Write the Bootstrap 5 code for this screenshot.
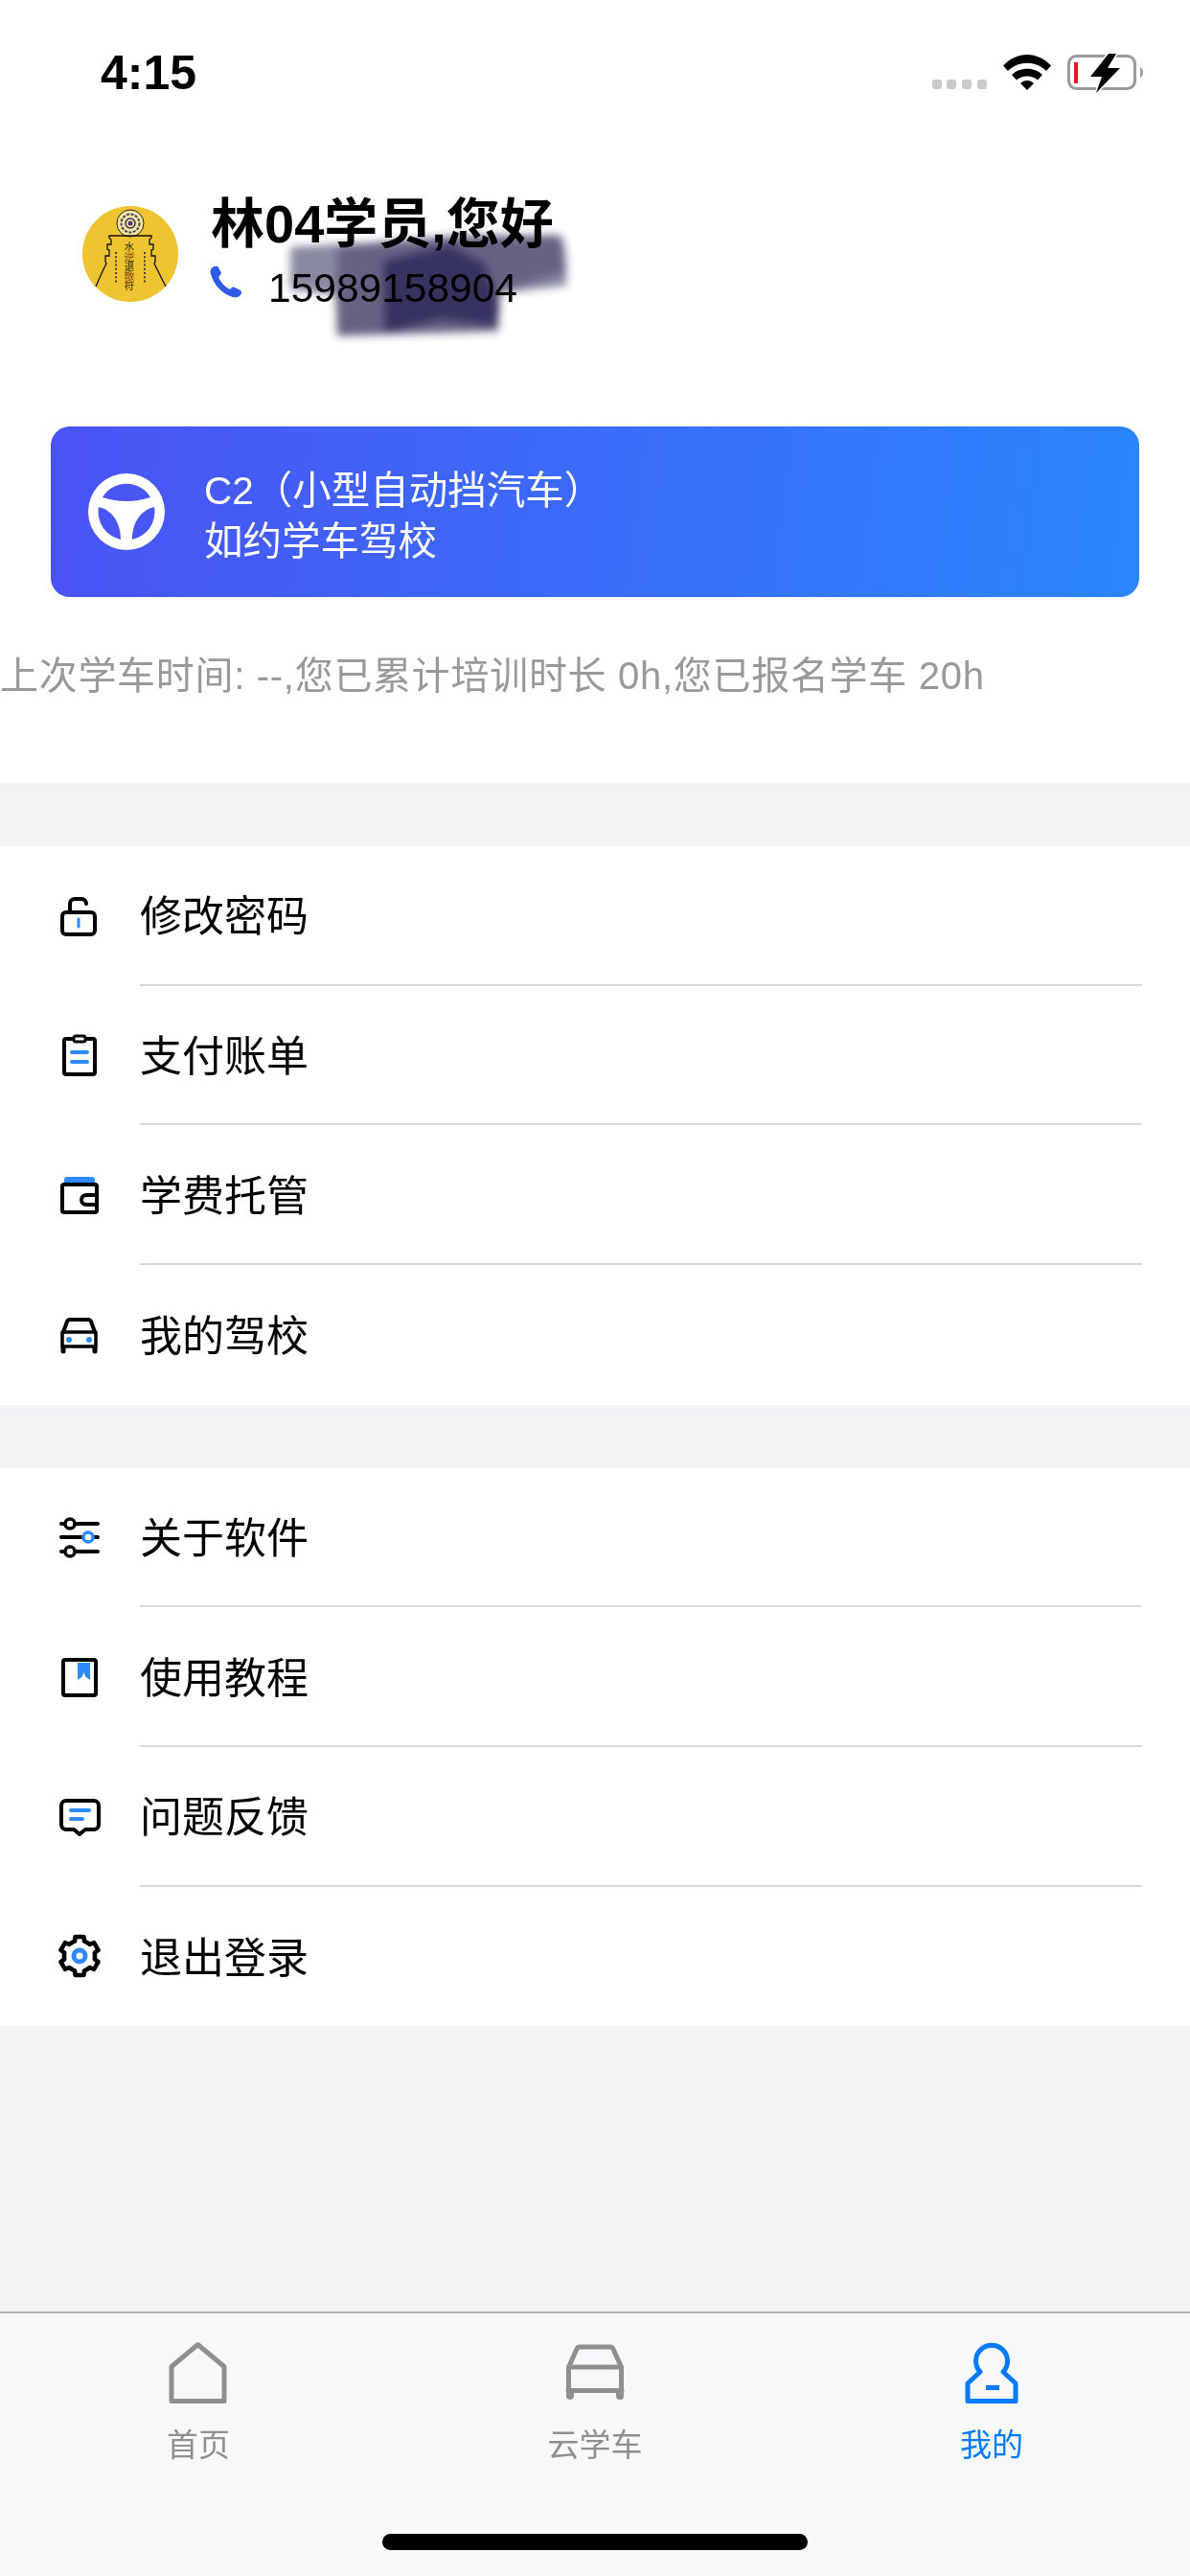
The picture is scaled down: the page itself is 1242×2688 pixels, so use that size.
<!DOCTYPE html>
<html lang="zh">
<head>
<meta charset="utf-8">
<title>我的</title>
<link href="https://cdn.jsdelivr.net/npm/bootstrap@5.3.0/dist/css/bootstrap.min.css" rel="stylesheet">
<style>
html,body{margin:0;height:2688px;width:1242px;overflow:hidden}
body{font-family:"Liberation Sans","Noto Sans CJK SC",sans-serif;background:#f2f3f5;color:#000}
.screen-wrap{height:2688px;width:1242px}
.top-area{background:#fff;height:817px}
.status-row{height:132px;padding:0 47px 0 105px}
.clock{font-size:50px;font-weight:700;line-height:1;margin-top:20px}
.status-icons{width:224px;height:60px;margin-top:22px}
.profile-box{padding-left:86px;margin-top:83px;height:100px;gap:34px}
.avatar-pic{width:100px;height:100px}
.hello{font-size:56px;font-weight:700;line-height:64px;margin-top:-13px;white-space:nowrap}
.phone-line{font-size:42.5px;line-height:48px;margin-top:11px;white-space:nowrap}
.phone-ico{width:34px;height:34px;margin:-14px 27px 0 -1px}
.smudge{left:285px;top:230px;width:330px;height:130px;pointer-events:none;mix-blend-mode:multiply}
.licence-card{margin:130px 53px 0;height:178px;border-radius:20px;background:linear-gradient(97deg,#4a52f3 0%,#2a86fe 100%);color:#fff;padding-left:39px;gap:41px}
.wheel-ico{width:80px;height:80px}
.licence-text{font-size:40.5px;line-height:53px;padding-top:10px}
.note-line{font-size:40px;line-height:56px;color:#999;padding-left:0;margin-top:54px;white-space:nowrap;letter-spacing:.7px}
.menu-group{margin-top:66px;background:#fff}
.menu-row{height:145.67px;border:0;padding:0;background:#fff;color:#000}
.menu-ico{width:60px;height:60px;margin:0 33px 0 53px;flex:none}
.menu-label{font-size:44px;height:100%;margin-right:50px;padding-top:5px;border-bottom:2px solid #d9d9d9;flex:1}
.menu-row:last-child .menu-label{border-bottom:0}
.tabbar{background:#f7f8fa;border-top:2px solid #b3b3b5;height:276px}
.tab-cell{padding-top:27px;width:414px}
.tab-ico{width:70px;height:70px;display:block}
.tab-name{font-size:33px;line-height:40px;color:#8f8f8f;margin-top:21px}
.tab-on{color:#007aff}
.home-bar{width:444px;height:17px;border-radius:9px;background:#000;margin:72px auto 0}
</style>
</head>
<body>
<div class="screen-wrap d-flex flex-column position-relative">
  <div class="top-area position-relative">
    <div class="status-row d-flex justify-content-between align-items-center">
      <div class="clock">4:15</div>
      <svg class="status-icons" viewBox="971 47 224 60">
        <g fill="#c9c9cc"><rect x="973" y="83" width="10" height="10" rx="3"/><rect x="988" y="83" width="10" height="10" rx="3"/><rect x="1004" y="83" width="10" height="10" rx="3"/><rect x="1020" y="83" width="10" height="10" rx="3"/></g>
        <g fill="#000"><path d="M1047 68.500 C1061 53 1083 53 1097 68.500 L1092 74 C1081 63 1063 63 1052 74Z"/><path d="M1056 78 C1064 69.500 1080 69.500 1088 78 L1083 83.500 C1077 78 1067 78 1061 83.500Z"/><path d="M1065 87 C1069 83 1075 83 1079 87 L1072 94Z"/></g>
        <rect x="1115.500" y="58.500" width="69" height="34" rx="8" fill="none" stroke="#9a9a9a" stroke-width="3"/>
        <path d="M1190 70 C1194 72 1194 79 1190 81Z" fill="#9a9a9a"/>
        <rect x="1121" y="65" width="4" height="22" fill="#f0141e"/>
        <path d="M1157 56 L1138 80 H1150 L1144 97 L1169 71 H1156 L1165 56Z" fill="#000" stroke="#fff" stroke-width="3" paint-order="stroke"/>
      </svg>
    </div>
    <div class="profile-box d-flex align-items-start">
      <svg class="avatar-pic flex-none" viewBox="0 0 100 100">
        <circle cx="50" cy="50" r="50" fill="#eec430"/>
        <circle cx="50" cy="18" r="14" fill="#f3e3a4" stroke="#222" stroke-width="1"/>
        <circle cx="50" cy="18" r="9.500" fill="none" stroke="#445" stroke-width="2" stroke-dasharray="3 1.500"/>
        <circle cx="50" cy="18" r="5" fill="none" stroke="#335" stroke-width="1.500"/>
        <circle cx="50" cy="18" r="2.500" fill="#513a7a"/>
        <path d="M30 35 Q27 33 28 31 H72 Q73 33 70 35 V40 H74 V45 L72 46 V52 H76 V58 L75 60 L79 68 L87 84 M30 35 V40 H26 V45 L28 46 V52 H24 V58 L25 60 L21 68 L14 84" fill="none" stroke="#111" stroke-width="1.300"/>
        <g font-size="10.500" text-anchor="middle" fill="#2a2208"><text x="49" y="46">水</text><text x="49" y="57">逆</text><text x="49" y="67">退</text><text x="49" y="77">散</text><text x="49" y="87">符</text></g>
        <circle cx="49" cy="52" r="6" fill="#e89a22" opacity=".45"/><circle cx="49" cy="74" r="6" fill="#e89a22" opacity=".45"/>
        <path d="M35 48 V80 M65 48 V80" stroke="#332" stroke-width="1.800" stroke-dasharray="2 2.200"/>
      </svg>
      <div>
        <div class="hello">林04学员,您好</div>
        <div class="phone-line d-flex align-items-center">
          <svg class="phone-ico flex-none" viewBox="0 0 34 34"><path fill="#2f5be7" d="M3 2 C1 3 0 5 1 9 C4 20 13 30 24 33 C29 34 32 32 33 29 C33.500 27.500 33 26.500 31 25.500 L26 23 C24.500 22.300 23.500 22.500 22.500 23.500 L21 25 C15 22 11 17 9 12 L11 10 C12 9 12 8 11.500 7 L9 2 C8 .3 5 .5 3 2Z"/></svg>
          <span>15989158904</span>
        </div>
      </div>
    </div>
    <svg class="smudge position-absolute" viewBox="285 230 330 130">
      <defs><filter id="smudgeBlur" x="-10%" y="-10%" width="120%" height="120%"><feGaussianBlur stdDeviation="4"/></filter></defs>
      <g filter="url(#smudgeBlur)" fill="#2c2758">
        <path d="M303 258 L400 252 L480 245 L584 245 Q593 252 591 298 L522 306 L520 346 L352 351 L350 308 L303 302Z" opacity=".55"/>
        <path d="M352 258 L450 250 L584 247 L589 284 L522 304 L520 344 L352 349Z" opacity=".4"/>
        <path d="M400 272 L470 256 L506 275 L521 320 L516 340 L460 333 L402 347 Z" opacity=".8"/>
      </g>
    </svg>
    <div class="licence-card d-flex align-items-center">
      <svg class="wheel-ico flex-none" viewBox="0 0 80 80"><path fill="#fff" fill-rule="evenodd" d="M40 0 A40 40 0 1 1 40 80 A40 40 0 1 1 40 0Z M15 25 A29 29 0 0 1 65 25 Q40 33 15 25Z M11 35 C24 38 34 50 34 69 A29.500 29.500 0 0 1 11 35Z M69 35 C56 38 46 50 46 69 A29.500 29.500 0 0 0 69 35Z"/></svg>
      <div class="licence-text">
        <div>C2（小型自动挡汽车）</div>
        <div>如约学车驾校</div>
      </div>
    </div>
    <div class="note-line">上次学车时间: --,您已累计培训时长 0h,您已报名学车 20h</div>
  </div>

  <div class="menu-group list-group list-group-flush rounded-0">
    <div class="menu-row list-group-item d-flex align-items-center">
      <svg class="menu-ico" viewBox="53 926 60 60" fill="none" stroke-linecap="round" stroke-linejoin="round"><rect x="65" y="952" width="34" height="23" rx="4" stroke="#000" stroke-width="4"/><path d="M73 951 V943 A5 5 0 0 1 78 938 H85 A5 5 0 0 1 90 943" stroke="#000" stroke-width="4"/><path d="M82 959 V967" stroke="#2f8bfb" stroke-width="3"/></svg>
      <div class="menu-label d-flex align-items-center">修改密码</div>
    </div>
    <div class="menu-row list-group-item d-flex align-items-center">
      <svg class="menu-ico" viewBox="53 1072 60 60" fill="none" stroke-linecap="round" stroke-linejoin="round"><rect x="67" y="1085" width="32" height="37" rx="2" stroke="#000" stroke-width="4"/><rect x="77" y="1082" width="12" height="6" rx="2" fill="#fff" stroke="#000" stroke-width="3"/><path d="M75 1099 H91 M75 1109 H91" stroke="#2f8bfb" stroke-width="4"/></svg>
      <div class="menu-label d-flex align-items-center">支付账单</div>
    </div>
    <div class="menu-row list-group-item d-flex align-items-center">
      <svg class="menu-ico" viewBox="53 1217 60 60" fill="none" stroke-linejoin="round"><path d="M67 1236 V1231 Q67 1228 70 1228 H96 Q99 1228 99 1231 V1236Z" fill="#2f8bfb"/><rect x="65" y="1236" width="36" height="29" rx="2" fill="#fff" stroke="#000" stroke-width="4"/><path d="M101 1247 H90 A5 5 0 0 0 90 1257 H101" stroke="#000" stroke-width="4"/></svg>
      <div class="menu-label d-flex align-items-center">学费托管</div>
    </div>
    <div class="menu-row list-group-item d-flex align-items-center">
      <svg class="menu-ico" viewBox="53 1365 60 60" fill="none" stroke-linecap="round" stroke-linejoin="round"><path d="M66 1392 L70 1381 Q71 1379 73 1379 H92 Q94 1379 95 1381 L99 1392" stroke="#000" stroke-width="4"/><rect x="65" y="1392" width="35" height="15" stroke="#000" stroke-width="3.500"/><path d="M66 1408 V1412 M99 1408 V1412" stroke="#000" stroke-width="5"/><circle cx="72" cy="1400" r="3" fill="#2f8bfb"/><circle cx="93" cy="1400" r="3" fill="#2f8bfb"/></svg>
      <div class="menu-label d-flex align-items-center">我的驾校</div>
    </div>
  </div>

  <div class="menu-group list-group list-group-flush rounded-0">
    <div class="menu-row list-group-item d-flex align-items-center">
      <svg class="menu-ico" viewBox="53 1575 60 60" fill="none" stroke-linecap="round"><path d="M64 1591 H102 M64 1605 H102 M64 1620 H102" stroke="#000" stroke-width="4"/><circle cx="73" cy="1591" r="5" fill="#fff" stroke="#000" stroke-width="3.500"/><circle cx="92" cy="1605" r="5" fill="#fff" stroke="#2f8bfb" stroke-width="3.500"/><circle cx="73" cy="1620" r="5" fill="#fff" stroke="#000" stroke-width="3.500"/></svg>
      <div class="menu-label d-flex align-items-center">关于软件</div>
    </div>
    <div class="menu-row list-group-item d-flex align-items-center">
      <svg class="menu-ico" viewBox="53 1721 60 60" fill="none" stroke-linejoin="round"><rect x="66" y="1733" width="34" height="37" rx="2" stroke="#000" stroke-width="4"/><path d="M81 1736 V1754 L85.500 1751 L87.500 1746 L89.500 1751 L94 1754 V1736Z" fill="#2f8bfb"/></svg>
      <div class="menu-label d-flex align-items-center">使用教程</div>
    </div>
    <div class="menu-row list-group-item d-flex align-items-center">
      <svg class="menu-ico" viewBox="53 1867 60 60" fill="none" stroke-linecap="round" stroke-linejoin="round"><path d="M69 1880 H98 A5 5 0 0 1 103 1885 V1905 A5 5 0 0 1 98 1910 H89 L83 1915 L77 1910 H69 A5 5 0 0 1 64 1905 V1885 A5 5 0 0 1 69 1880Z" stroke="#000" stroke-width="4"/><path d="M74 1890 H93 M74 1899 H86" stroke="#2f8bfb" stroke-width="4"/></svg>
      <div class="menu-label d-flex align-items-center">问题反馈</div>
    </div>
    <div class="menu-row list-group-item d-flex align-items-center">
      <svg class="menu-ico" viewBox="53 2012 60 60" fill="none" stroke-linecap="round" stroke-linejoin="round">
        <g transform="translate(83 2042)" stroke="#000" stroke-width="4.500">
          <path id="cogTooth" d="M-8 -13.860 A16 16 0 0 1 -5 -15.300 L-4.500 -20 H4.500 L5 -15.300 A16 16 0 0 1 8 -13.860"/>
          <use href="#cogTooth" transform="rotate(60)"/><use href="#cogTooth" transform="rotate(120)"/><use href="#cogTooth" transform="rotate(180)"/><use href="#cogTooth" transform="rotate(240)"/><use href="#cogTooth" transform="rotate(300)"/>
        </g>
        <circle cx="83" cy="2042" r="6" stroke="#2f8bfb" stroke-width="5"/>
      </svg>
      <div class="menu-label d-flex align-items-center">退出登录</div>
    </div>
  </div>

  <div class="flex-grow-1"></div>

  <div class="tabbar">
    <div class="d-flex">
      <div class="tab-cell d-flex flex-column align-items-center">
        <svg class="tab-ico" viewBox="172 2441 70 70" fill="none" stroke="#8f8f8f" stroke-width="5" stroke-linejoin="round"><path d="M206.500 2446.500 L234 2469.500 V2505.500 H179 V2469.500Z"/></svg>
        <div class="tab-name">首页</div>
      </div>
      <div class="tab-cell d-flex flex-column align-items-center">
        <svg class="tab-ico" viewBox="586 2441 70 70" fill="none" stroke="#8f8f8f" stroke-linecap="round" stroke-linejoin="round"><path d="M594 2469 L602 2451 Q603 2449 605 2449 H637 Q639 2449 640 2451 L648 2469" stroke-width="5"/><path d="M593.500 2498 V2470 H648.500 V2498" stroke-width="5"/><path d="M593 2494.500 H649" stroke-width="5"/><path d="M595 2497 V2500 M647 2497 V2500" stroke-width="8"/></svg>
        <div class="tab-name">云学车</div>
      </div>
      <div class="tab-cell d-flex flex-column align-items-center">
        <svg class="tab-ico" viewBox="999 2441 70 70" fill="none" stroke="#007aff" stroke-width="5" stroke-linejoin="round"><path d="M1022 2475 A16.500 16.500 0 1 1 1046 2475 L1059 2487 V2505.500 H1009 V2487Z"/><path d="M1028 2491.500 H1042" stroke-width="5"/></svg>
        <div class="tab-name tab-on">我的</div>
      </div>
    </div>
    <div class="home-bar"></div>
  </div>
</div>
<script src="https://cdn.jsdelivr.net/npm/bootstrap@5.3.0/dist/js/bootstrap.bundle.min.js"></script>
</body>
</html>
